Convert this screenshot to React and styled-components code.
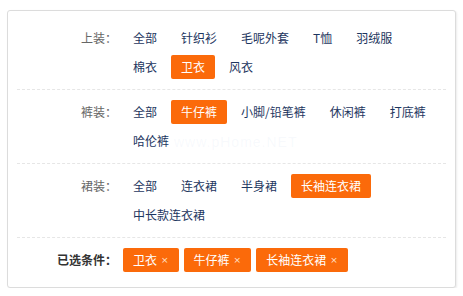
import React from "react";
import styled, { createGlobalStyle } from "styled-components";

const Global = createGlobalStyle`
  html, body { margin: 0; padding: 0; background: #fff; }
  body { font-family: "Noto Sans CJK SC", "Noto Sans", sans-serif; font-size: 12px; }
`;

const Page = styled.div`
  padding: 10px 0 0 7px;
`;

const Panel = styled.div`
  position: relative;
  width: 447px;
  border: 1px solid #dcdcdc;
  border-radius: 3px;
  box-shadow: 1px 1px 2px rgba(0, 0, 0, 0.08);
  padding: 5px 0;
  background: #fff;
`;

const Row = styled.div`
  display: flex;
  align-items: flex-start;
  margin: 0 9px;
  padding: 10px 0;
  border-bottom: ${(p) => (p.$last ? "none" : "1px dashed #e6e6e6")};
`;

const Label = styled.div`
  width: 100px;
  flex: none;
  text-align: right;
  line-height: 24px;
  height: 24px;
  color: ${(p) => (p.$strong ? "#333" : "#666")};
  font-weight: ${(p) => (p.$strong ? 700 : 400)};
  white-space: nowrap;
`;

const List = styled.div`
  flex: 1;
  margin-left: 6px;
  display: flex;
  flex-wrap: wrap;
  gap: 5px 4px;
`;

const Item = styled.span`
  display: inline-block;
  height: 24px;
  line-height: 24px;
  padding: 0 10px;
  border-radius: 2px;
  white-space: nowrap;
  color: ${(p) => (p.$active ? "#fff" : "#1d3660")};
  background: ${(p) => (p.$active ? "#fb6a0a" : "transparent")};
`;

const Tags = styled.div`
  margin-left: 6px;
  display: flex;
  gap: 5px;
`;

const Tag = styled.span`
  display: inline-flex;
  align-items: center;
  gap: 4px;
  height: 24px;
  line-height: 24px;
  padding: 0 10px;
  border-radius: 2px;
  background: #fb6a0a;
  color: #fff;
  white-space: nowrap;
`;

const Close = styled.span`
  font-family: "DejaVu Sans", sans-serif;
  font-size: 9px;
  color: #ffe2cc;
`;

const Watermark = styled.div`
  position: absolute;
  left: 166px;
  top: 123px;
  font-family: "Liberation Sans", sans-serif;
  font-size: 14px;
  letter-spacing: 1px;
  color: rgba(180, 200, 225, 0.1);
  pointer-events: none;
`;

const groups = [
  { label: "上装：", items: ["全部", "针织衫", "毛呢外套", "T恤", "羽绒服", "棉衣", "卫衣", "风衣"], active: "卫衣" },
  { label: "裤装：", items: ["全部", "牛仔裤", "小脚/铅笔裤", "休闲裤", "打底裤", "哈伦裤"], active: "牛仔裤" },
  { label: "裙装：", items: ["全部", "连衣裙", "半身裙", "长袖连衣裙", "中长款连衣裙"], active: "长袖连衣裙" },
];

const chosen = ["卫衣", "牛仔裤", "长袖连衣裙"];

export default function App() {
  return (
    <Page>
      <Global />
      <Panel>
        {groups.map((g) => (
          <Row key={g.label}>
            <Label>{g.label}</Label>
            <List>
              {g.items.map((it) => (
                <Item key={it} $active={it === g.active}>
                  {it}
                </Item>
              ))}
            </List>
          </Row>
        ))}
        <Row $last>
          <Label $strong>已选条件：</Label>
          <Tags>
            {chosen.map((c) => (
              <Tag key={c}>
                {c}
                <Close>×</Close>
              </Tag>
            ))}
          </Tags>
        </Row>
        <Watermark>www.pHome.NET</Watermark>
      </Panel>
    </Page>
  );
}
